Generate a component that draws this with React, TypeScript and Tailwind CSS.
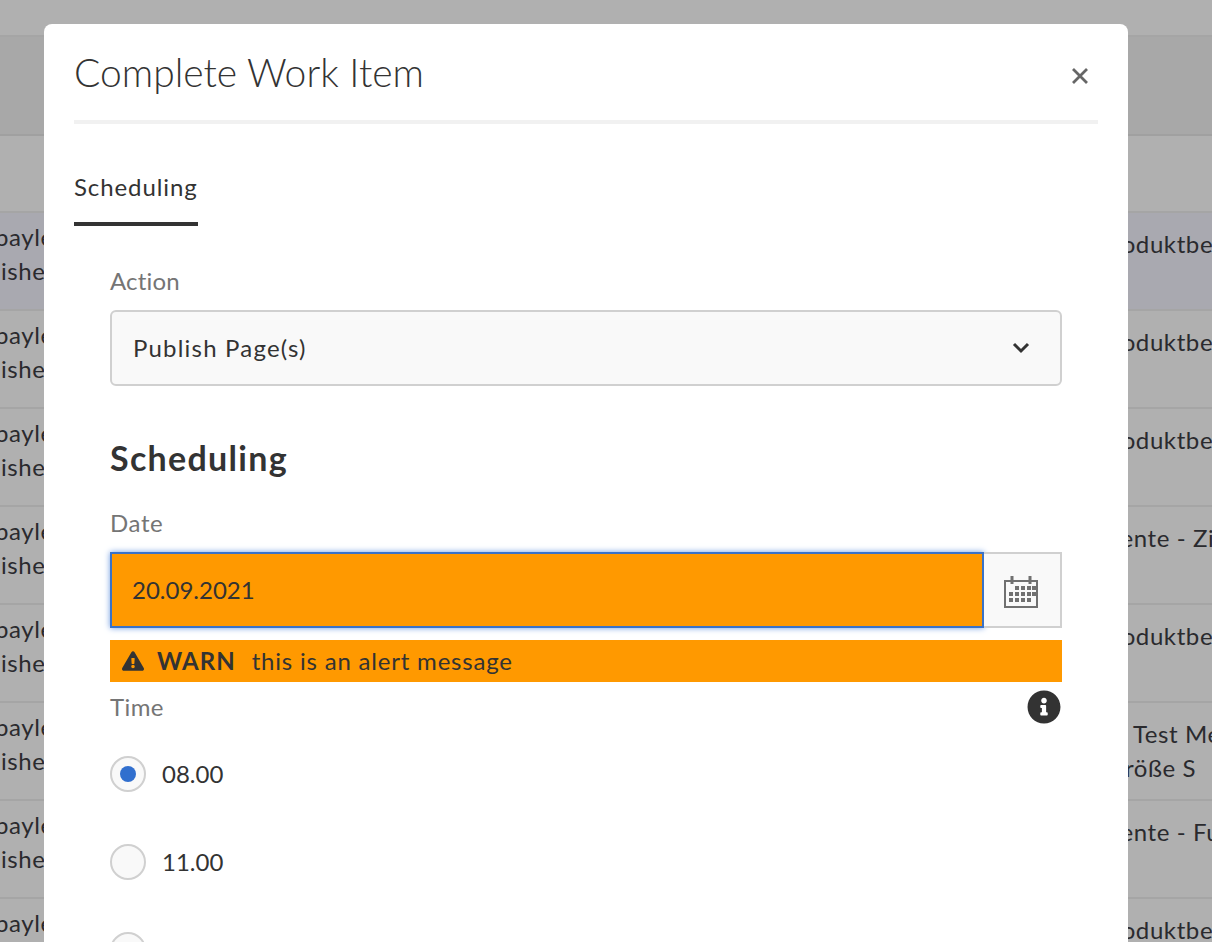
import { FaExclamationTriangle, FaInfoCircle } from 'react-icons/fa'

const rows = [
  { right: [{ t: 'Produktbeschreibung', c: '' }], w: 'w-[114px]', selected: true },
  { right: [{ t: 'Produktbeschreibung', c: '' }], w: 'w-[114px]' },
  { right: [{ t: 'Produktbeschreibung', c: '' }], w: 'w-[114px]' },
  { right: [{ t: 'Komponente - Zitat', c: '' }], w: 'w-[184px]' },
  { right: [{ t: 'Produktbeschreibung', c: '' }], w: 'w-[114px]' },
  {
    right: [
      { t: 'Test Medien', c: '' },
      { t: 'Größe S', c: '-ml-[26px]' },
    ],
    w: 'w-[79px]',
  },
  { right: [{ t: 'Komponente - Fußzeile', c: '' }], w: 'w-[184px]' },
  { right: [{ t: 'Produktbeschreibung', c: '' }], w: 'w-[114px]' },
]

const CalendarIcon = () => (
  <svg width="34" height="32" viewBox="0 0 34 32" fill="none" className="-ml-[2px] mt-[4px]">
    <rect x="1" y="5" width="32" height="26" stroke="#707070" strokeWidth="2" />
    <rect x="6.5" y="0" width="3" height="8" fill="#707070" />
    <rect x="24.5" y="0" width="3" height="8" fill="#707070" />
    {[
      [11, 17, 23, 28],
      [5, 11, 17, 23, 28],
      [5, 11, 17, 23],
    ].map((xs, r) =>
      xs.map((x) => <rect key={`${x}-${r}`} x={x} y={10 + r * 6} width="4" height="4" fill="#707070" />),
    )}
  </svg>
)

const Radio = ({ label, checked }: { label: string; checked?: boolean }) => (
  <div className="flex h-[36px] items-center gap-[16px]">
    <div className="flex h-[36px] w-[36px] items-center justify-center rounded-full border-2 border-[#d0d0d0] bg-[#f9f9f9]">
      {checked && <div className="h-[16px] w-[16px] rounded-full bg-[#316fce]" />}
    </div>
    <span className="text-[24px] text-[#333]">{label}</span>
  </div>
)

export default function App() {
  return (
    <div className="relative h-[942px] overflow-hidden bg-[#b0b0b0] font-['Lato',sans-serif] text-[24px] leading-[32px] text-[#2a2a2e]">
      <div className="h-[37px] border-b-2 border-[#a5a5a5]" />
      <div className="h-[99px] border-b-2 border-[#a0a0a0] bg-[#a8a8a8]" />
      <div className="h-[77px] border-b-2 border-[#a5a5a5]" />
      {rows.map((row, i) => (
        <div
          key={i}
          className={`flex h-[98px] justify-between border-b-2 border-[#a5a5a5] tracking-[0.6px] ${row.selected ? 'bg-[#a9a9b0]' : ''}`}
        >
          <div className="w-[44px] whitespace-nowrap pt-[7px] leading-[34px]">
            <div className="-ml-[5px]">payle</div>
            <div className="ml-[1px]">ished</div>
          </div>
          <div className={`${row.w} whitespace-nowrap pt-[14px] leading-[34px]`}>
            {row.right.map((line) => (
              <div key={line.t} className={line.c}>
                {line.t}
              </div>
            ))}
          </div>
        </div>
      ))}

      <div className="absolute left-[44px] top-[24px] h-[1000px] w-[1084px] rounded-[8px] bg-white px-[30px]">
        <div className="relative h-[100px] border-b-4 border-[#f1f1f1]">
          <h1 className="pt-[25px] text-[39px] font-light leading-[46px] text-[#333]">Complete Work Item</h1>
          <svg className="absolute right-[9px] top-[43px]" width="18" height="18" viewBox="0 0 18 18">
            <path d="M2 2 L16 16 M16 2 L2 16" stroke="#666" strokeWidth="2.8" />
          </svg>
        </div>
        <div className="mt-[47px] inline-block border-b-4 border-[#333] pb-[19px] text-[24px] leading-[32px] tracking-[0.9px] text-[#333]">
          Scheduling
        </div>
        <div className="pl-[36px] pr-[36px]">
          <div className="mt-[39px] text-[24px] tracking-[0.2px] text-[#757575]">Action</div>
          <div className="mt-[13px] flex h-[76px] items-center justify-between rounded-[6px] border-2 border-[#d0d0d0] bg-[#f9f9f9] pl-[21px] pr-[30px] text-[#333]">
            <span className="-mt-[1px] tracking-[1.2px]">Publish Page(s)</span>
            <svg width="18" height="12" viewBox="0 0 18 12" fill="none">
              <path d="M2 2 L9 9 L16 2" stroke="#333" strokeWidth="3" />
            </svg>
          </div>
          <h2 className="mt-[50px] text-[34px] font-bold leading-[44px] tracking-[1.3px] text-[#333]">Scheduling</h2>
          <div className="mt-[27px] tracking-[0.6px] text-[#757575]">Date</div>
          <div className="mt-[13px] flex h-[76px]">
            <div className="flex flex-1 items-center border-2 border-[#3a72c8] bg-[#ff9900] pl-[20px] text-[#333] shadow-[0_0_6px_#6f9be0]">
              <span className="-mt-[1px]">20.09.2021</span>
            </div>
            <div className="flex w-[78px] items-center justify-center border-2 border-l-0 border-[#d0d0d0] bg-[#f9f9f9]">
              <CalendarIcon />
            </div>
          </div>
          <div className="mt-[12px] flex h-[42px] items-center bg-[#ff9900] pl-[12px] text-[#333]">
            <FaExclamationTriangle size={22} />
            <span className="ml-[13px] font-bold tracking-[1px]">WARN</span>
            <span className="ml-[16px] tracking-[0.8px]">this is an alert message</span>
          </div>
          <div className="mt-[9px] flex h-[32px] items-center justify-between">
            <span className="tracking-[0.4px] text-[#757575]">Time</span>
            <FaInfoCircle size={34} color="#333" className="mr-[1px]" />
          </div>
          <div className="mt-[33px] flex flex-col gap-[52px]">
            <Radio label="08.00" checked />
            <Radio label="11.00" />
            <Radio label="14.00" />
          </div>
        </div>
      </div>
    </div>
  )
}
